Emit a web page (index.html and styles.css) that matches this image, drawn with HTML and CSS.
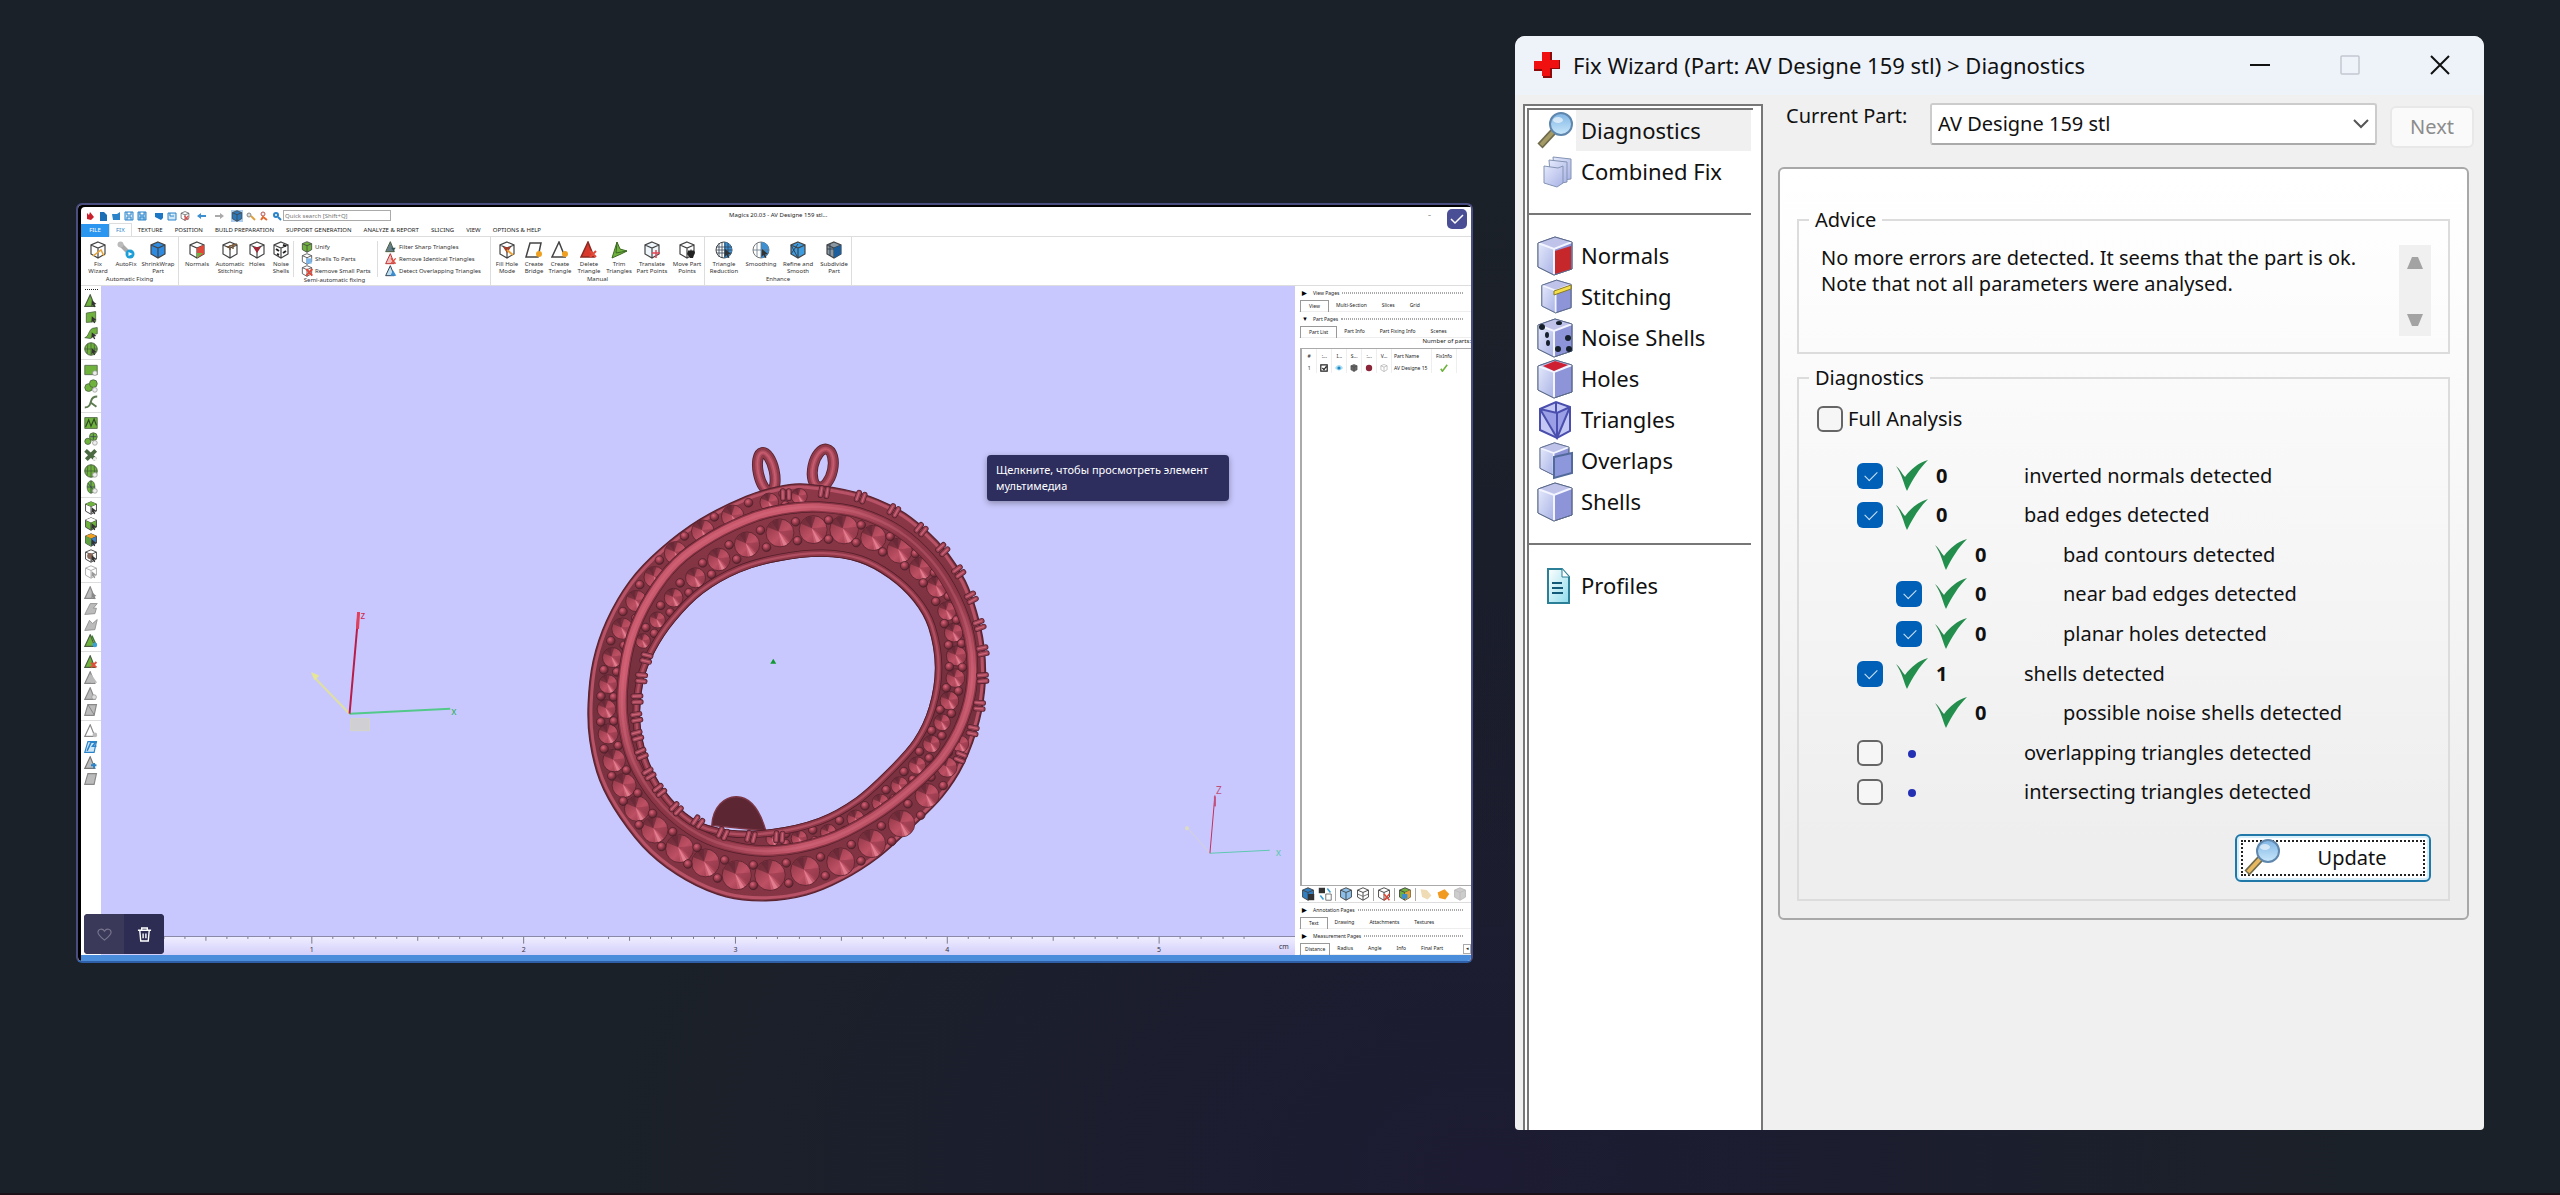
FILE: index.html
```html
<!DOCTYPE html>
<html lang="en">
<head>
<meta charset="utf-8">
<title>Fix Wizard</title>
<link rel="stylesheet" href="styles.css">
</head>
<body>
<svg class="defs" aria-hidden="true">
  <defs>
    <linearGradient id="gSide" x1="0" y1="0" x2="1" y2="1"><stop offset="0" stop-color="#e4e9fb"/><stop offset="1" stop-color="#a9b3e6"/></linearGradient>
    <linearGradient id="gLens" x1="0" y1="0" x2="0" y2="1"><stop offset="0" stop-color="#7fb4e4"/><stop offset="1" stop-color="#c9e8fb"/></linearGradient>
    <linearGradient id="gTick" x1="0" y1="0" x2="1" y2="1"><stop offset="0" stop-color="#2f7d4f"/><stop offset="1" stop-color="#17a04a"/></linearGradient>
    <linearGradient id="gDoc" x1="0" y1="0" x2="1" y2="1"><stop offset="0" stop-color="#fff"/><stop offset="1" stop-color="#8fdcec"/></linearGradient>
  </defs>
  <symbol id="lens" viewBox="0 0 36 38"><path d="M16 20L3 34" stroke="#6f6a4c" stroke-width="7"/><path d="M16 20L4 33" stroke="var(--grip,#a39a66)" stroke-width="4"/><ellipse cx="24" cy="12" rx="11" ry="11" fill="url(#gLens)" stroke="#5f86ad" stroke-width="2"/><ellipse cx="21" cy="8" rx="5" ry="3" fill="#fff" opacity=".6"/></symbol>
  <symbol id="box" viewBox="0 0 36 40"><path d="M1 7L18 1l17 5v27L17 39 1 31z" fill="#8d94d8" stroke="#5b6a99" stroke-width="1"/><path d="M1 7l16 6v26L1 31z" fill="url(#gSide)"/><path d="M1 7L18 1l17 5-18 7z" fill="#bfc3ea"/><path d="M1 7l16 6 18-7M17 13v26" fill="none" stroke="#f2f4ff" stroke-width="2"/><path d="M1 7L18 1l17 5v27L17 39 1 31z" fill="none" stroke="#5b6a88" stroke-width="1"/></symbol>
  <symbol id="cube" viewBox="0 0 18 18"><path d="M9 1l7 3v9l-7 4-7-4V4z" fill="var(--c,#fff)"/><path d="M9 1l7 3v9l-7 4-7-4V4zM2 4l7 3 7-3M9 7v10" fill="none" stroke="var(--s,#444)" stroke-width="1.2"/></symbol>
  <symbol id="cursor" viewBox="0 0 18 18"><path d="M10 8l6 5-3 .5 1.500 3-1.500.5-1.500-3-2 2z" fill="var(--k,#333)"/></symbol>
  <symbol id="tri" viewBox="0 0 18 18"><path d="M8 1L1 16h13z" fill="var(--c,#6fb23e)" stroke="var(--s,#4b5f42)" stroke-width="1.500"/></symbol>
  <symbol id="quad" viewBox="0 0 18 18"><path d="M5 2h11l-3 14H1z" fill="var(--c,#6fb23e)" stroke="var(--s,#4b5f42)" stroke-width="1.500"/></symbol>
  <symbol id="ball" viewBox="0 0 18 18"><circle cx="9" cy="9" r="8" fill="var(--c,#6fb23e)" stroke="var(--s,#4b5f42)" stroke-width="1.200"/><path d="M9 1v16M1 9h16M5 2l-1 13M13 2l1 13" stroke="var(--s,#4b5f42)" fill="none"/></symbol>
  <symbol id="tick" viewBox="0 0 32 32"><path d="M0 6c4 3 6 8 9 11C15 9 22 3 32 0 23 9 17 19 11 31 8 25 6 14 0 6z" fill="url(#gTick)"/></symbol>
</svg>

<main class="stage">
  <section class="app" aria-label="Magics">
    <header class="quick">
      <div class="quick-icons">
        <svg viewBox="0 0 10 10"><path d="M2 2l2 2 1-3 4 5-3 3-4-1z" fill="#c9202b"/></svg>
        <svg viewBox="0 0 10 10"><path d="M2 1h4l3 3v6H2z" fill="#1c6fb5"/></svg>
        <svg viewBox="0 0 10 10"><path d="M1 3h5l3-2v8H2z" fill="#2b84c9"/></svg>
        <svg viewBox="0 0 10 10"><path d="M1 1h8v8H1zM3 1v3h4V1M3 9V6h4v3" fill="#cfe6f7" stroke="#2b84c9"/></svg>
        <svg viewBox="0 0 10 10"><path d="M1 1h8v8H1zM3 1v3h4V1M3 9V6h4v3" fill="#9cc8ea" stroke="#2b84c9"/></svg>
        <i></i>
        <svg viewBox="0 0 10 10"><path d="M1 2h8v5L7 9 1 6z" fill="#1c78c5"/></svg>
        <svg viewBox="0 0 10 10"><path d="M1 2h8v7H1zM3 2v3h4" fill="#cfe6f7" stroke="#2b84c9"/></svg>
        <svg viewBox="0 0 18 18"><use href="#cube"/><path d="M8 9l7 7M15 9l-7 7" stroke="#e04848" stroke-width="2"/></svg>
        <i></i>
        <svg viewBox="0 0 10 10"><path d="M0 5l4-3v2h5v2H4v2z" fill="#3d8fd0"/></svg>
        <i></i>
        <svg viewBox="0 0 10 10"><path d="M10 5L6 2v2H1v2h5v2z" fill="#aaa"/></svg>
        <i></i>
        <svg class="on" viewBox="0 0 18 18"><use href="#cube" style="--c:#2b78bd"/></svg>
        <svg viewBox="0 0 10 10"><circle cx="3" cy="4" r="2" fill="#ddd" stroke="#888"/><path d="M5 5l4 4" stroke="#e0a040" stroke-width="2"/></svg>
        <svg viewBox="0 0 10 10"><circle cx="4" cy="3" r="2" fill="#eee" stroke="#b55"/><path d="M2 9l2-3 4 3" stroke="#e06a30" stroke-width="2" fill="none"/></svg>
        <svg viewBox="0 0 10 10"><circle cx="4" cy="4" r="2" fill="none" stroke="#2b84c9" stroke-width="2"/><path d="M6 6l3 3" stroke="#2b84c9" stroke-width="2"/></svg>
        <input class="search" type="text" aria-label="Quick search" placeholder="Quick search [Shift+Q]">
      </div>
      <span class="app-title">Magics 20.03 - AV Designe 159 stl...</span>
      <span class="app-min">–</span>
    </header>
    <nav class="menu">
      <a class="file" href="#">FILE</a><a class="sel" href="#">FIX</a><a href="#">TEXTURE</a><a href="#">POSITION</a><a href="#">BUILD PREPARATION</a><a href="#">SUPPORT GENERATION</a><a href="#">ANALYZE &amp; REPORT</a><a href="#">SLICING</a><a href="#">VIEW</a><a href="#">OPTIONS &amp; HELP</a>
    </nav>
    <div class="ribbon">
      <div class="group g1">
        <div class="tools">
          <button><svg viewBox="0 0 18 18"><use href="#cube"/><path d="M4 15l8-6 3 6" stroke="#e8a33a" stroke-width="1.500" fill="none"/></svg>Fix<br>Wizard</button>
          <button><svg viewBox="0 0 18 18"><path d="M3 3l9 9" stroke="#aaa" stroke-width="4"/><circle cx="3.500" cy="3.500" r="3" fill="#bbb"/><circle cx="13" cy="13" r="4.500" fill="#1c9fd8"/><path d="M11.500 11l4 2-4 2z" fill="#fff"/></svg>AutoFix</button>
          <button><svg viewBox="0 0 18 18"><use href="#cube" style="--c:#2f8be0"/></svg>ShrinkWrap<br>Part</button>
        </div>
        <span class="cap">Automatic Fixing</span>
      </div>
      <div class="group g2">
        <div class="tools">
          <button><svg viewBox="0 0 18 18"><use href="#cube"/><path d="M9 7l7-3v9l-7 4z" fill="#e0483a"/><path d="M9 12h6l-6 5z" fill="#6fb23e"/></svg>Normals</button>
          <button><svg viewBox="0 0 18 18"><use href="#cube"/><path d="M6 6l10-3M9 4v5M12 3v5" stroke="#7a5a3a" stroke-width="1.500"/></svg>Automatic<br>Stitching</button>
          <button><svg viewBox="0 0 18 18"><use href="#cube"/><path d="M5 6h8l-4 6z" fill="#a02834"/></svg>Holes</button>
          <button><svg viewBox="0 0 18 18"><use href="#cube"/><path d="M4 8l3 2M11 4l3 1M11 12l3-2M5 13l2 1" stroke="#222" stroke-width="2"/></svg>Noise<br>Shells</button>
          <ul class="list">
            <li><svg viewBox="0 0 18 18"><use href="#cube" style="--c:#6fb23e"/></svg>Unify</li>
            <li><svg viewBox="0 0 18 18"><use href="#cube"/><path d="M8 8h8v8H8z" fill="#7db7ea"/></svg>Shells To Parts</li>
            <li><svg viewBox="0 0 18 18"><use href="#cube"/><path d="M8 6l9 10M17 6L8 16" stroke="#e04838" stroke-width="3"/></svg>Remove Small Parts</li>
          </ul>
          <ul class="list">
            <li><svg viewBox="0 0 18 18"><use href="#tri" style="--c:#68808c"/><path d="M9 10h7l-3 5z" fill="#355"/></svg>Filter Sharp Triangles</li>
            <li><svg viewBox="0 0 18 18"><use href="#tri" style="--c:#f0c0c0;--s:#b33"/><path d="M9 8l7 8M16 8l-7 8" stroke="#e04838" stroke-width="2"/></svg>Remove Identical Triangles</li>
            <li><svg viewBox="0 0 18 18"><use href="#tri" style="--c:#bfe0f2;--s:#345"/><path d="M8 16h9L12 8z" fill="#3d8fd0"/></svg>Detect Overlapping Triangles</li>
          </ul>
        </div>
        <span class="cap">Semi-automatic fixing</span>
      </div>
      <div class="group g3">
        <div class="tools">
          <button><svg viewBox="0 0 18 18"><use href="#cube"/><path d="M5 6h8l-4 6z" fill="#a0402c"/><path d="M9 9l6 5" stroke="#e8a33a" stroke-width="2"/></svg>Fill Hole<br>Mode</button>
          <button><svg viewBox="0 0 18 18"><use href="#quad" style="--c:#fff;--s:#444"/><circle cx="14" cy="13" r="3" fill="#f0a020"/></svg>Create<br>Bridge</button>
          <button><svg viewBox="0 0 18 18"><use href="#tri" style="--c:#fff;--s:#444"/><circle cx="14" cy="13" r="3" fill="#f0a020"/></svg>Create<br>Triangle</button>
          <button><svg viewBox="0 0 18 18"><use href="#tri" style="--c:#d8382c;--s:#8a2a22"/><path d="M10 10l6 6M16 10l-6 6" stroke="#e04838" stroke-width="2"/></svg>Delete<br>Triangle</button>
          <button><svg viewBox="0 0 18 18"><path d="M7 1l3 7 7 2-6 3-9 4z" fill="#6fb23e" stroke="#3e6a24"/><path d="M7 1L6 12l11-2" fill="none" stroke="#3e6a24"/></svg>Trim<br>Triangles</button>
          <button><svg viewBox="0 0 18 18"><use href="#cube" style="--c:#eef6fc"/><path d="M9 12h8M13 9v8" stroke="#e04858" stroke-width="1.500"/></svg>Translate<br>Part Points</button>
          <button><svg viewBox="0 0 18 18"><use href="#cube"/><path d="M10 10l1-1 1 1 1-2 1 2 1-1 1 1 1 1-2 6h-3l-3-4z" fill="#222"/></svg>Move Part<br>Points</button>
        </div>
        <span class="cap">Manual</span>
      </div>
      <div class="group g4">
        <div class="tools">
          <button><svg viewBox="0 0 18 18"><circle cx="9" cy="9" r="8" fill="#fff" stroke="#444"/><path d="M9 1a8 8 0 010 16z" fill="#3d8fd0"/><path d="M4 2v14M7 1v16M10 1v16M13 2v14M1 6h16M1 9h16M2 12h14" stroke="#345" stroke-width=".8"/><use href="#cursor"/></svg>Triangle<br>Reduction</button>
          <button><svg viewBox="0 0 18 18"><circle cx="9" cy="9" r="8" fill="#fff" stroke="#777"/><path d="M9 1a8 8 0 010 16z" fill="#3d8fd0"/><path d="M5 2v14M9 1v16M1 9h16" stroke="#678" stroke-width=".8"/><use href="#cursor"/></svg>Smoothing</button>
          <button><svg viewBox="0 0 18 18"><use href="#cube" style="--c:#3d9be0"/><path d="M2 4l7 13M2 13l7-10" stroke="#345"/></svg>Refine and<br>Smooth</button>
          <button><svg viewBox="0 0 18 18"><use href="#cube" style="--c:#8a98a4"/><path d="M9 7l7-3v9l-7 4z" fill="#1c5f9c"/><path d="M2 8h7M5 3v12" stroke="#345"/></svg>Subdivide<br>Part</button>
        </div>
        <span class="cap">Enhance</span>
      </div>
    </div>
    <div class="work">
      <aside class="strip">
        <div><svg viewBox="0 0 18 18"><use href="#tri"/><use href="#cursor"/></svg><svg viewBox="0 0 18 18"><path d="M3 4l12-2v13l-12 1z" fill="#6fb23e" stroke="#4b5f42"/><use href="#cursor"/></svg><svg viewBox="0 0 18 18"><path d="M1 15c5-1 5-10 10-12l6-1v8c-6 0-6 6-9 6z" fill="#6fb23e" stroke="#4b5f42"/><use href="#cursor"/></svg><svg viewBox="0 0 18 18"><use href="#ball"/><use href="#cursor"/></svg></div>
        <div><svg viewBox="0 0 18 18"><path d="M1 3h16v12H1z" fill="#6fb23e" stroke="#4b5f42"/><circle cx="14" cy="13" r="3" fill="#eee" stroke="#999"/></svg><svg viewBox="0 0 18 18"><circle cx="6" cy="11" r="5" fill="#6fb23e" stroke="#4b5f42"/><circle cx="12" cy="6" r="5" fill="#6fb23e" stroke="#4b5f42"/><circle cx="14" cy="14" r="3" fill="#eee" stroke="#999"/></svg><svg viewBox="0 0 18 18"><path d="M1 16c6 0 7-4 8-8s3-6 8-6M9 10l7 5" fill="none" stroke="#5d7a50" stroke-width="2.500"/></svg></div>
        <div><svg viewBox="0 0 18 18"><path d="M1 2h16v14H1z" fill="#6fb23e" stroke="#4b5f42"/><path d="M2 14l4-9 3 8 4-9 3 8" stroke="#2e4a24" stroke-width="1.500" fill="none"/></svg><svg viewBox="0 0 18 18"><circle cx="5" cy="12" r="4" fill="#6fb23e" stroke="#4b5f42"/><circle cx="12" cy="6" r="5" fill="#6fb23e" stroke="#4b5f42"/><path d="M12 2v8M8 6h8" stroke="#345"/><circle cx="14" cy="14" r="3" fill="#eee" stroke="#999"/></svg><svg viewBox="0 0 18 18"><path d="M2 3l13 12M15 3L3 15" stroke="#4b6a42" stroke-width="5"/><circle cx="14" cy="14" r="2.500" fill="#eee"/></svg><svg viewBox="0 0 18 18"><use href="#ball"/><circle cx="14" cy="14" r="3" fill="#eee" stroke="#999"/></svg><svg viewBox="0 0 18 18"><ellipse cx="9" cy="9" rx="5" ry="8" fill="#6fb23e" stroke="#4b5f42"/><path d="M9 1v16M4 9h10M5 4l8 10" stroke="#345"/><circle cx="14" cy="14" r="3" fill="#eee" stroke="#999"/></svg></div>
        <div><svg viewBox="0 0 18 18"><use href="#cube"/><path d="M2 4l7-3 7 3-7 3z" fill="#6fb23e"/><use href="#cursor"/></svg><svg viewBox="0 0 18 18"><use href="#cube" style="--c:#6fb23e"/><path d="M2 4l7-3 7 3-7 3z" fill="#fff"/><use href="#cursor"/></svg><svg viewBox="0 0 18 18"><use href="#cube" style="--c:#3f7fc4"/><path d="M2 4l7-3 7 3-7 3z" fill="#f0a020"/><path d="M2 4l7 3v10l-7-4z" fill="#5fa040"/><use href="#cursor"/></svg><svg viewBox="0 0 18 18"><use href="#cube"/><circle cx="8" cy="9" r="4" fill="#8a6a5a"/><use href="#cursor"/></svg><svg viewBox="0 0 18 18"><use href="#cube" style="--s:#aaa"/><use href="#cursor" style="--k:#999"/></svg></div>
        <div class="dim"><svg viewBox="0 0 18 18"><use href="#tri"/><use href="#cursor"/></svg><svg viewBox="0 0 18 18"><path d="M1 16L8 2h9l-5 6h4l-2 7z" fill="#bbb" stroke="#888"/></svg><svg viewBox="0 0 18 18"><path d="M1 16L7 3l4 4 6-5-3 13z" fill="#bbb" stroke="#888"/></svg><svg class="live" viewBox="0 0 18 18"><use href="#tri"/><path d="M10 2l5 11" stroke="#3e7a34" stroke-width="2"/><circle cx="14" cy="14" r="3" fill="#3d9fd8"/></svg></div>
        <div class="dim"><svg class="live" viewBox="0 0 18 18"><use href="#tri"/><path d="M9 10l7 6M16 9l-7 7" stroke="#e0503a" stroke-width="2.500"/></svg><svg viewBox="0 0 18 18"><use href="#tri"/><path d="M9 4l8 11H9z" fill="#bbb"/></svg><svg viewBox="0 0 18 18"><use href="#tri"/><circle cx="13" cy="13" r="3" fill="#ddd" stroke="#999"/></svg><svg viewBox="0 0 18 18"><use href="#quad"/><path d="M5 2l8 13" stroke="#777"/></svg></div>
        <div class="dim"><svg viewBox="0 0 18 18"><use href="#tri" style="--c:#fff"/><circle cx="14" cy="14" r="3" fill="#bbb"/></svg><svg viewBox="0 0 18 18"><use href="#quad" style="--c:#cfe6f7;--s:#2b84c9"/><path d="M4 14L9 3h6l-4 5h5" fill="none" stroke="#2b84c9" stroke-width="2"/></svg><svg viewBox="0 0 18 18"><use href="#tri" style="--s:#777"/><path d="M9 12h7M13 9v7" stroke="#2b84c9" stroke-width="2.500"/></svg><svg viewBox="0 0 18 18"><use href="#quad"/></svg></div>
      </aside>
      <div class="view">
        <svg class="scene" viewBox="101 284 1195 652" role="img" aria-label="Ring model">
          <defs>
            <radialGradient id="bead" cx=".4" cy=".35" r=".65"><stop offset="0" stop-color="#d8627a"/><stop offset=".5" stop-color="#9c3d4e"/><stop offset="1" stop-color="#58222e"/></radialGradient>
            <linearGradient id="gem" x1="0" y1="0" x2="1" y2="1"><stop offset="0" stop-color="#85323f"/><stop offset=".55" stop-color="#be5064"/><stop offset="1" stop-color="#8a3344"/></linearGradient>
            <linearGradient id="body" x1="0" y1="0" x2="0" y2="1"><stop offset="0" stop-color="#8e3848"/><stop offset=".5" stop-color="#74303e"/><stop offset="1" stop-color="#863545"/></linearGradient>
            <linearGradient id="tube" x1="0" y1="0" x2="1" y2="1"><stop offset="0" stop-color="#c05266"/><stop offset=".25" stop-color="#cc5a6e"/><stop offset=".45" stop-color="#8d3748"/><stop offset=".6" stop-color="#8d3748"/><stop offset=".75" stop-color="#c4566a"/><stop offset="1" stop-color="#a04052"/></linearGradient>
          </defs>
          <g id="ring" transform="translate(560 420) scale(.33333)"></g>
          <path d="M774 658l3 5h-6z" fill="#0f9a30"/>
          <g fill="none" stroke-width="2">
            <path d="M349 713l-35-36" stroke="#dfdfa0"/><path d="M311 672l7 3-4 4z" fill="#e8e890" stroke="#e4e49a" stroke-width="1"/>
            <path d="M349 713l101-5" stroke="#52c98a"/><path d="M349 713l9-102" stroke="#b81c48"/><path d="M357 628l1-17" stroke="#e0405c" stroke-width="3"/>
            <path d="M350 718h19v12h-19z" fill="#cfcfd4" stroke="#d4d4c8" stroke-width="1"/>
          </g>
          <g fill="none" stroke-width="1">
            <path d="M1212 853l-23-26" stroke="#d4d2d0"/><circle cx="1189" cy="828" r="2" fill="#dcdcc0"/>
            <path d="M1212 853l60-3" stroke="#5cc8b0"/><path d="M1212 853l5-58" stroke="#c0305c"/><path d="M1217 806v-10" stroke="#c0507c" stroke-width="2"/>
          </g>
          <g class="axis"><text x="360" y="618" fill="#d02a50">z</text><text x="451" y="714" fill="#30b060">x</text><text x="1218" y="794" fill="#c0507c">Z</text><text x="1278" y="856" fill="#5cc8b0">x</text></g>
        </svg>
        <svg class="ruler" id="ruler" viewBox="101 936 1195 19" preserveAspectRatio="none"></svg>
      </div>
      <aside class="side">
        <h3><b>▶</b>View Pages<i></i></h3>
        <nav><a class="sel" href="#">View</a><a href="#">Multi-Section</a><a href="#">Slices</a><a href="#">Grid</a></nav>
        <h3><b>▼</b>Part Pages<i></i></h3>
        <nav><a class="sel" href="#">Part List</a><a href="#">Part Info</a><a href="#">Part Fixing Info</a><a href="#">Scenes</a></nav>
        <p>Number of parts:</p>
        <div class="parts">
          <table>
            <thead><tr><th>#</th><th>:...</th><th>I...</th><th>S...</th><th>:...</th><th>V...</th><th class="name">Part Name</th><th class="info">FixInfo</th></tr></thead>
            <tbody><tr><td>1</td>
              <td><svg viewBox="0 0 10 10"><path d="M1 1h8v8H1zM3 5l2 2 3-4" fill="#fff" stroke="#222" stroke-width="1.500"/></svg></td>
              <td><svg viewBox="0 0 10 10"><path d="M0 5c3-5 7-5 10 0-3 4-7 4-10 0z" fill="#a8dcf2"/><circle cx="5" cy="5" r="2" fill="#1c86c4"/></svg></td>
              <td><svg viewBox="0 0 18 18"><use href="#cube" style="--c:#666"/></svg></td>
              <td><svg viewBox="0 0 10 10"><circle cx="5" cy="5" r="4" fill="#8a2438"/></svg></td>
              <td><svg viewBox="0 0 18 18"><use href="#cube" style="--s:#999"/></svg></td>
              <td class="name">AV Designe 15</td>
              <td><svg viewBox="0 0 10 10"><path d="M1 6l2 3 6-8" fill="none" stroke="#6fb23e" stroke-width="2"/></svg></td></tr></tbody>
          </table>
        </div>
        <div class="bar">
          <svg viewBox="0 0 18 18"><use href="#cube" style="--c:#2f7fc4"/><path d="M9 9h8v8H9z" fill="#333"/></svg><svg viewBox="0 0 18 18"><path d="M1 1h8v7H1z" fill="#333"/><path d="M10 9h7v8h-7z" fill="#fff" stroke="#555"/><path d="M3 11l4 5M12 2l4 5" stroke="#3d9fd8" stroke-width="2"/></svg><i></i>
          <svg viewBox="0 0 18 18"><use href="#cube" style="--c:#8cc0ea"/></svg><svg viewBox="0 0 18 18"><use href="#cube"/><path d="M2 9l7 3 7-3" stroke="#555" fill="none"/></svg><i></i>
          <svg viewBox="0 0 18 18"><use href="#cube"/><path d="M9 9l7 8M16 9l-7 8" stroke="#e04838" stroke-width="2"/></svg><i></i>
          <svg viewBox="0 0 18 18"><use href="#cube" style="--c:#6fb23e"/><path d="M9 7l7-3v9l-7 4z" fill="#e0a23a"/><path d="M5 9h7v6H5z" fill="#3d8fd0"/></svg><i></i>
          <svg viewBox="0 0 18 18"><path d="M2 3l8 1 6 7-5 5-7-3z" fill="#f0dcb4"/></svg><svg viewBox="0 0 18 18"><path d="M2 7l9-4 6 6-5 7-8-2z" fill="#f09a20"/></svg><svg viewBox="0 0 18 18"><use href="#cube" style="--c:#ccc;--s:#bbb"/></svg>
        </div>
        <h3><b>▶</b>Annotation Pages<i></i></h3>
        <nav><a class="sel" href="#">Text</a><a href="#">Drawing</a><a href="#">Attachments</a><a href="#">Textures</a></nav>
        <h3><b>▶</b>Measurement Pages<i></i></h3>
        <nav class="tight"><a class="sel" href="#">Distance</a><a href="#">Radius</a><a href="#">Angle</a><a href="#">Info</a><a href="#">Final Part</a><button aria-label="Scroll tabs">◂</button></nav>
      </aside>
    </div>
    <div class="tip" role="tooltip">Щелкните, чтобы просмотреть элемент мультимедиа</div>
    <button class="picked" aria-label="Selected"><svg viewBox="0 0 20 20"><path d="M4 10l4 4 8-8" fill="none" stroke="#fff" stroke-width="1.500"/></svg></button>
    <div class="acts">
      <button aria-label="Like"><svg viewBox="0 0 16 16"><path d="M8 14C3 10 1 8 1 5.500 1 2 6 1 8 4.500 10 1 15 2 15 5.500 15 8 13 10 8 14z" fill="none" stroke="#77758c" stroke-width="1.200"/></svg></button>
      <button class="bin" aria-label="Delete"><svg viewBox="0 0 16 16"><path d="M1 3.500h14M5 3V1h6v2M3 4l1 11h8l1-11M6.500 7v5M9.500 7v5" fill="none" stroke="#fff" stroke-width="1.500"/></svg></button>
    </div>
  </section>

  <section class="dialog" aria-label="Fix Wizard">
    <header class="titlebar">
      <svg class="cross" viewBox="0 0 28 28"><path d="M10 1h9v8h8v9h-8v9h-9v-7H1V10h9z" fill="#8c0a0a"/><path d="M9 1h8v8h9v8h-9v8H9v-7H1v-8h8z" fill="#f01010"/></svg>
      <h1>Fix Wizard (Part: AV Designe 159 stl) &gt; Diagnostics</h1>
      <div class="wins">
        <button aria-label="Minimize"><svg viewBox="0 0 20 20"><path d="M0 10h20" stroke="#111" stroke-width="2"/></svg></button>
        <button aria-label="Maximize" disabled><svg viewBox="0 0 20 20"><rect x="1" y="1" width="18" height="18" rx="1" fill="none" stroke="#c3c8d0" stroke-width="1.500"/></svg></button>
        <button aria-label="Close"><svg viewBox="0 0 20 20"><path d="M1 1l18 18M19 1L1 19" stroke="#111" stroke-width="2"/></svg></button>
      </div>
    </header>
    <div class="content">
      <nav class="steps">
        <div class="inner">
        <a class="sel" href="#"><svg viewBox="0 0 36 38"><use href="#lens"/></svg><span>Diagnostics</span></a>
        <a href="#"><svg viewBox="0 0 36 40"><g stroke="#8494b4" fill="url(#gSide)"><path d="M16 5l18 2v20l-16 2z"/><path d="M12 8l18 2v20l-16 3z"/><path d="M7 14l14 2 5-2v17l-6 4-13-4z"/></g></svg><span>Combined Fix</span></a>
        <hr>
        <a href="#"><svg viewBox="0 0 36 40"><use href="#box"/><path d="M18 15l16-5v23l-16 5z" fill="#c5272b"/></svg><span>Normals</span></a>
        <a href="#"><svg viewBox="0 0 36 40"><use href="#box" x="4" y="2" width="31" height="35"/><path d="M17 14l17-6v4l-17 6z" fill="#f5e04c" stroke="#8a7a20"/></svg><span>Stitching</span></a>
        <a href="#"><svg viewBox="0 0 36 40"><use href="#box"/><g fill="#16202c"><ellipse cx="5" cy="9" rx="3" ry="3"/><ellipse cx="22" cy="5" rx="3" ry="2"/><ellipse cx="10" cy="17" rx="2" ry="3"/><ellipse cx="11" cy="25" rx="2" ry="3"/><ellipse cx="21" cy="31" rx="3" ry="3"/><ellipse cx="31" cy="20" rx="3" ry="3"/><ellipse cx="32" cy="31" rx="3" ry="3"/></g></svg><span>Noise Shells</span></a>
        <a href="#"><svg viewBox="0 0 36 40"><use href="#box"/><path d="M6 7l12-5 13 4-14 6z" fill="#cf1f33"/></svg><span>Holes</span></a>
        <a href="#"><svg viewBox="0 0 36 40"><path d="M3 9l16-7 14 5v24L20 38 3 30z" fill="#c4c8f4" stroke="#4a4fae" stroke-width="2"/><path d="M3 9l17 29L33 7 20 13z" fill="#9a9fe6"/><path d="M3 9l17 29L33 7M3 9l17 4 13-6M20 13v25M19 2v11" fill="none" stroke="#4a4fae" stroke-width="2"/></svg><span>Triangles</span></a>
        <a href="#"><svg viewBox="0 0 36 40"><use href="#box" x="2" y="1" width="31" height="34"/><path d="M17 16l18-4v20l-18 5z" fill="#8d98dc" stroke="#52699c" stroke-width="2"/></svg><span>Overlaps</span></a>
        <a href="#"><svg viewBox="0 0 36 40"><use href="#box"/></svg><span>Shells</span></a>
        <hr>
        <a href="#"><svg viewBox="0 0 36 40"><path d="M11 3h14l7 8v26H11z" fill="url(#gDoc)" stroke="#2b7f96" stroke-width="2"/><path d="M25 3v8h7" fill="#fff" stroke="#2b7f96"/><path d="M15 17h10M15 22h11M15 27h11" stroke="#145a78" stroke-width="2"/></svg><span>Profiles</span></a>
        </div>
      </nav>
      <div class="pane">
        <div class="current">
          <label for="part">Current Part:</label>
          <div class="pick"><select id="part"><option>AV Designe 159 stl</option></select><svg viewBox="0 0 16 10"><path d="M1 1l7 7 7-7" fill="none" stroke="#555" stroke-width="2"/></svg></div>
          <button class="next" disabled>Next</button>
        </div>
        <div class="sheet">
          <fieldset class="advice">
            <legend>Advice</legend>
            <p>No more errors are detected. It seems that the part is ok.<br>Note that not all parameters were analysed.</p>
            <div class="scroll"><svg viewBox="0 0 16 12"><path d="M5 0h6l5 12H0z" fill="#a3a3a3"/></svg><svg viewBox="0 0 16 12"><path d="M5 12h6l5-12H0z" fill="#a3a3a3"/></svg></div>
          </fieldset>
          <fieldset class="diag">
            <legend>Diagnostics</legend>
            <label class="full"><input type="checkbox">Full Analysis</label>
            <div class="checks">
              <div class="row"><input id="c1" type="checkbox" checked><svg><use href="#tick"/></svg><b>0</b><label for="c1">inverted normals detected</label></div>
              <div class="row"><input id="c2" type="checkbox" checked><svg><use href="#tick"/></svg><b>0</b><label for="c2">bad edges detected</label></div>
              <div class="row sub"><i></i><svg><use href="#tick"/></svg><b>0</b><span>bad contours detected</span></div>
              <div class="row sub"><input id="c3" type="checkbox" checked><svg><use href="#tick"/></svg><b>0</b><label for="c3">near bad edges detected</label></div>
              <div class="row sub"><input id="c4" type="checkbox" checked><svg><use href="#tick"/></svg><b>0</b><label for="c4">planar holes detected</label></div>
              <div class="row"><input id="c5" type="checkbox" checked><svg><use href="#tick"/></svg><b>1</b><label for="c5">shells detected</label></div>
              <div class="row sub"><i></i><svg><use href="#tick"/></svg><b>0</b><span>possible noise shells detected</span></div>
              <div class="row"><input id="c6" type="checkbox"><svg viewBox="0 0 32 32"><circle cx="16" cy="17" r="4" fill="#2430b4"/></svg><b></b><label for="c6">overlapping triangles detected</label></div>
              <div class="row"><input id="c7" type="checkbox"><svg viewBox="0 0 32 32"><circle cx="16" cy="17" r="4" fill="#2430b4"/></svg><b></b><label for="c7">intersecting triangles detected</label></div>
            </div>
            <button class="update"><span class="focus"><svg viewBox="0 0 36 38"><use href="#lens"/></svg><span>Update</span></span></button>
          </fieldset>
        </div>
      </div>
    </div>
  </section>
</main>
<script src="ring.js"></script>
</body>
</html>
```
FILE: styles.css
```css
* { box-sizing: border-box; }
body { margin: 0; background: #1b2128; font-family: "Noto Sans", "Open Sans", sans-serif; color: #111; }
button { font: inherit; color: inherit; border: 0; padding: 0; background: none; }
a { color: inherit; text-decoration: none; }
ul, p, h1, h3 { margin: 0; padding: 0; list-style: none; font-weight: 400; }
.defs { position: absolute; width: 0; height: 0; }

.stage { display: grid; grid-template-columns: 1397fr 969fr; align-items: center; gap: 42px; min-height: 100vh; padding: 36px 76px 63px; border-bottom: 2px solid #1c1118;
  background: radial-gradient(ellipse 35% 50% at 58% 98%, #1c1b33, transparent), radial-gradient(ellipse 10% 40% at 58% 55%, #1a1d2b, transparent); }

/* Magics window */
.app { position: relative; min-width: 0; aspect-ratio: 1397 / 760; display: flex; flex-direction: column; overflow: hidden; border: 2px solid #4a4d80; border-bottom-color: #2f5fa6; border-radius: 6px; background: #fff; box-shadow: inset 3px 2px #000; padding: 2px 0 0 3px; font-size: 6px; line-height: 7px; color: #333; }
.app::after { content: ""; height: 6px; flex: none; background: #4a8ddb; }
.quick { flex: none; height: 17px; display: flex; align-items: center; padding-left: 4px; }
.quick-icons { display: flex; align-items: center; gap: 3px; flex: 0 0 644px; }
.quick-icons svg { width: 10px; height: 10px; }
.quick-icons i { width: 1px; height: 8px; }
.quick-icons .on { background: #a8cdf0; width: 12px; height: 12px; }
.search { width: 108px; height: 11px; margin-left: -2px; padding: 0 1px; border: 1px solid #aaa; font: inherit; }
.search::placeholder { color: #777; }
.app-title { flex: 1; color: #222; }
.app-min { margin-right: 40px; }
.menu { flex: none; height: 13px; display: flex; align-items: center; gap: 12px; border-bottom: 1px solid #ddd; color: #222; }
.menu .file { background: #2b96f0; color: #fff; width: 28px; line-height: 13px; text-align: center; margin-right: -12px; }
.menu .sel { color: #2b84c9; padding: 0 6px; line-height: 13px; border: 1px solid #ddd; border-width: 1px 1px 0; margin-right: -6px; }
.ribbon { flex: none; height: 49px; display: flex; border-bottom: 1px solid #ddd; }
.group { display: flex; flex-direction: column; border-right: 1px solid #ddd; text-align: center; }
.tools { flex: 1; display: grid; padding-top: 4px; }
.g1 { width: 98px; } .g1 .tools { grid-template-columns: 34px 22px 42px; }
.g2 { width: 312px; } .g2 .tools { grid-template-columns: 36px 30px 24px 24px 84px 114px; }
.g3 { width: 214px; } .g3 .tools { grid-template-columns: 32px 22px 30px 28px 32px 34px 36px; }
.g4 { width: 147px; } .g4 .tools { grid-template-columns: 38px 36px 38px 34px; }
.tools button { display: flex; flex-direction: column; align-items: center; white-space: nowrap; line-height: 7px; }
.tools button svg { width: 18px; height: 18px; margin-bottom: 2px; flex: none; }
.cap { height: 9px; }
.list { text-align: left; padding-left: 7px; border-left: 1px solid #ddd; }
.list li { display: flex; align-items: center; gap: 2px; height: 12px; white-space: nowrap; }
.list svg { width: 12px; height: 12px; }

.work { flex: 1; min-height: 0; display: flex; }
.strip { width: 20px; flex: none; padding-top: 8px; }
.strip::before { content: ""; display: block; width: 13px; margin: -5px 0 4px 4px; border-top: 1px dotted #222; }
.strip div { display: flex; flex-direction: column; align-items: center; gap: 2px; padding-bottom: 3px; margin-bottom: 3px; border-bottom: 1px solid #ddd; }
.strip div:last-child { border: 0; }
.strip svg { width: 14px; height: 14px; }
.strip .dim { --c: #bbb; --s: #888; --k: #888; }
.strip .live { --c: #6fb23e; --s: #4b5f42; }
.view { flex: 1; min-width: 0; display: flex; flex-direction: column; background: #c9c8fe; }
.scene { flex: 1; min-height: 0; width: 100%; display: block; }
.axis { font-size: 10px; }
.ruler { flex: none; height: 19px; width: 100%; border-top: 1px solid #8a89a8; background: linear-gradient(#efedff, #d2cffb); font-size: 7px; fill: #334; }
.side { width: 176px; flex: none; padding-left: 4px; display: flex; flex-direction: column; font-size: 5px; background: #fff; overflow: hidden; color: #222; }
.side h3 { display: flex; align-items: center; height: 14px; flex: none; font-size: 5px; padding: 0 8px 0 3px; }
.side h3 b { width: 11px; color: #000; font-size: 6px; }
.side h3 i { flex: 1; height: 2px; margin-left: 3px; border: 1px dotted #aaa; border-width: 1px 0; }
.side nav { display: flex; align-items: center; height: 12px; flex: none; gap: 15px; padding-left: 1px; border-bottom: 1px solid #eee; }
.side nav .sel { padding: 0 8px; margin-right: -8px; line-height: 11px; border: 1px solid #999; border-width: 1px 1px 0; }
.side .tight .sel { padding: 0 4px; }
.side .tight button { border: 1px solid #aaa; width: 8px; height: 10px; margin-left: auto; }
.side p { text-align: right; height: 10px; font-size: 6px; }
.parts { flex: 1; border: 1px solid #aaa; border-width: 1px 0 1px 2px; margin-left: 1px; }
.parts table { border-collapse: collapse; width: 155px; table-layout: fixed; }
.parts th, .parts td { padding: 0; height: 10px; font-weight: 400; text-align: center; border-right: 1px solid #eee; }
.parts .name { width: 40px; text-align: left; padding-left: 2px; white-space: nowrap; overflow: hidden; }
.parts .info { width: 25px; }
.parts th { height: 14px; }
.parts td svg { width: 8px; height: 8px; display: block; margin: auto; }
.bar { display: flex; align-items: center; height: 17px; flex: none; gap: 3px; padding-left: 2px; border-bottom: 1px solid #ddd; }
.bar svg { width: 14px; height: 14px; flex: none; }
.bar i { width: 1px; height: 13px; background: #aaa; }

.tip { position: absolute; left: 909px; top: 250px; width: 242px; padding: 7px 9px; border-radius: 4px; background: #2d2d5e; color: #fff; font-size: 11px; line-height: 16px; box-shadow: 0 2px 6px #0005; }
.picked { position: absolute; right: 4px; top: 4px; width: 20px; height: 20px; border-radius: 5px; background: #4a4f95; }
.picked svg { width: 20px; display: block; }
.acts { position: absolute; left: 6px; bottom: 7px; display: flex; border-radius: 4px; overflow: hidden; background: #2d2d54; }
.acts button { width: 40px; height: 40px; display: grid; place-items: center; background: #3b3959; }
.acts .bin { background: #2d2d54; }
.acts svg { width: 15px; height: 15px; }

/* Fix wizard */
.dialog { min-width: 0; align-self: stretch; display: flex; flex-direction: column; background: #f0f0f0; border-radius: 10px 10px 4px 4px; overflow: hidden; font-size: 20px; line-height: 26px; }
.titlebar { flex: none; height: 59px; display: flex; align-items: center; gap: 12px; padding: 0 34px 2px 18px; background: #eef3fa; }
.cross { width: 28px; height: 28px; }
.titlebar h1 { flex: 1; font-size: 22px; line-height: 30px; white-space: nowrap; }
.wins { display: flex; gap: 70px; }
.wins svg { width: 20px; height: 20px; display: block; }
.content { flex: 1; display: flex; padding-left: 8px; }
.steps { width: 240px; flex: none; margin-top: 9px; padding: 2px 8px 0 2px; border: 2px solid #777; border-bottom: 0; background: #fff; }
.inner { height: 100%; border: solid #777; border-width: 2px 0 0 2px; padding-right: 2px; }
.steps a { display: flex; align-items: center; height: 41px; padding-left: 8px; font-size: 22px; }
.steps svg { width: 36px; height: 40px; flex: none; margin-right: 3px; }
.steps span { flex: 1; line-height: 41px; padding-left: 5px; }
.steps .sel span { background: #f0f0f0; }
.steps hr { margin: 0; height: 43px; border: 0; background: linear-gradient(#777, #777) center / 100% 2px no-repeat; }
.pane { flex: 1; min-width: 0; padding: 8px 10px 0 15px; }
.current { display: flex; align-items: flex-start; height: 64px; }
.current label { width: 152px; flex: none; padding-left: 8px; white-space: nowrap; }
.pick { position: relative; flex: 1; margin-right: 13px; }
.pick select { width: 100%; height: 42px; padding: 0 6px; appearance: none; font: inherit; color: #111; background: #fff; border: 2px solid #ccc; border-bottom-color: #aaa; border-radius: 3px; }
.pick svg { position: absolute; right: 8px; top: 16px; width: 16px; height: 10px; }
.next { width: 84px; height: 42px; margin-top: 3px; border: 2px solid #e8e8e8; border-radius: 6px; background: #fafafa; color: #8c8c8c; }
.sheet { margin-right: 5px; height: 753px; padding: 38px 17px 0; border: 2px solid #a8a8a8; border-radius: 6px; background: linear-gradient(#fff, #fdfdfd 15%, #eee 90%); }
fieldset { margin: 0; min-width: 0; border: 2px solid #dcdcdc; }
legend { padding: 0 6px; }
.advice { height: 147px; padding: 12px 17px 14px 22px; display: flex; justify-content: space-between; }
.advice legend { margin-left: -12px; }
.advice p { white-space: nowrap; }
.scroll { width: 32px; height: 91px; background: #f0f0f0; display: flex; flex-direction: column; justify-content: space-between; align-items: center; padding: 12px 0 10px; }
.scroll svg { width: 16px; height: 12px; }
.diag { height: 536px; margin-top: 11px; padding: 15px 17px 0 18px; display: flex; flex-direction: column; }
.diag legend { margin-left: -8px; }
.full { display: flex; align-items: center; gap: 5px; height: 26px; }
input[type=checkbox] { appearance: none; margin: 0; width: 26px; height: 26px; flex: none; border: 2px solid #666; border-radius: 6px; background: #f6f6f6; }
input[type=checkbox]:checked { border: 0; background: #0060b8; position: relative; }
input[type=checkbox]:checked::after { content: ""; position: absolute; left: 8px; top: 8px; width: 11px; height: 6px; border: solid #cfe4f6; border-width: 0 0 1px 1px; transform: rotate(-45deg); }
.checks { display: grid; grid-auto-rows: 1fr; height: 356px; margin-top: 24px; }
.row { display: grid; grid-template-columns: 39px 40px 88px 1fr; align-items: center; padding-left: 40px; white-space: nowrap; }
.row.sub { padding-left: 79px; }
.row svg { width: 32px; height: 32px; }
.update { align-self: flex-end; width: 196px; height: 48px; margin-top: 22px; padding: 4px; border: 2px solid #1f78a8; border-radius: 6px; background: #fff; box-shadow: inset 0 0 0 2px #d6effa; --grip: #e8b860; }
.focus { display: flex; align-items: center; height: 100%; border: 2px dotted #222; }
.focus svg { width: 38px; height: 38px; }
.focus span { flex: 1; text-align: center; }
```
FILE: ring.js
```js
// Draws the ring model and the ruler as SVG shapes.
const NS = 'http://www.w3.org/2000/svg';
const ring = document.getElementById('ring');

function add(parent, tag, attrs, text) {
  const el = document.createElementNS(NS, tag);
  for (const k in attrs) el.setAttribute(k, attrs[k]);
  if (text) el.textContent = text;
  parent.appendChild(el);
  return el;
}

// Closed Catmull-Rom curve through the points.
function loop(p) {
  const n = p.length;
  let d = `M${p[0]}`;
  for (let i = 0; i < n; i++) {
    const a = p[(i + n - 1) % n], b = p[i], c = p[(i + 1) % n], e = p[(i + 2) % n];
    d += `C${b[0] + (c[0] - a[0]) / 6} ${b[1] + (c[1] - a[1]) / 6} ${c[0] - (e[0] - b[0]) / 6} ${c[1] - (e[1] - b[1]) / 6} ${c}`;
  }
  return d + 'Z';
}

const outer = [[740,188],[900,215],[1020,265],[1100,325],[1170,400],[1220,480],[1253,570],[1275,670],[1280,780],[1262,900],[1215,1030],[1150,1130],[1060,1220],[960,1310],[850,1380],[740,1425],[620,1442],[500,1430],[380,1380],[270,1300],[180,1190],[120,1080],[90,960],[85,850],[100,720],[140,600],[210,480],[300,385],[420,295],[560,225],[660,195]];
const ridge = [[780,257],[900,275],[1020,330],[1120,420],[1190,530],[1232,650],[1240,780],[1212,900],[1150,1010],[1060,1100],[940,1190],[800,1260],[640,1292],[500,1275],[390,1225],[290,1135],[220,1020],[190,900],[190,780],[215,650],[270,530],[350,425],[460,345],[590,285],[690,262]];
const inner = [[790,405],[900,422],[990,470],[1065,540],[1110,620],[1130,740],[1112,860],[1065,960],[985,1050],[890,1135],[780,1195],[640,1228],[510,1230],[400,1195],[310,1105],[262,1010],[240,900],[250,780],[285,690],[345,600],[430,515],[540,452],[660,418]];

const inBand = [[250,660,22],[293,597,24],[342,530,28],[408,470,30],[478,415,34],[563,370,38],[662,335,42],[762,325,42],[855,325,43],[943,350,38],[1022,388,38],[1085,443,34],[1135,497,32],[1165,570,28],[1185,635,28],[1193,705,30],[1190,772,28],[1172,840,28],[1150,905,25],[1118,970,26],[1075,1035,26],[1022,1095,26],[965,1147,26],[890,1195,26],[808,1236,24],[720,1254,24],[640,1256,20]];
const outBand = [[720,225,24],[630,243,28],[520,285,34],[430,330,34],[348,395,34],[285,468,32],[230,540,32],[188,623,32],[158,710,30],[145,790,28],[140,865,28],[145,940,30],[163,1020,34],[193,1095,36],[232,1165,38],[285,1228,40],[360,1285,42],[438,1328,42],[532,1365,44],[632,1365,46],[738,1352,44],[845,1325,42],[938,1270,42],[1028,1210,40],[1105,1125,36],[1165,1040,30],[1205,970,25]];
const edge = [[260,712],[245,772],[232,835],[230,890],[232,945],[245,1000],[268,1060],[300,1110],[350,1165],[415,1205],[490,1240],[575,1250],[660,1250],[680,220],[795,212],[905,227],[1005,268],[1087,325],[1152,385],[1200,452],[1238,530],[1262,612],[1272,690],[1272,772],[1262,855],[1242,930],[1205,1010]];

// Bail loops and the tab behind the ring.
for (const [x, y, rx, ry, a] of [[621,152,24,60,-12], [791,140,30,58,12]]) {
  for (const [c, w] of [['#57222d', 33], ['#8f3a4a', 28], ['#b04d60', 14], ['#c65c6e', 5]])
    add(ring, 'ellipse', {cx: x, cy: y, rx, ry, transform: `rotate(${a} ${x} ${y})`, fill: 'none', stroke: c, 'stroke-width': w});
}
add(ring, 'path', {d: 'M457 1215C460 1160 495 1128 532 1129C580 1130 605 1180 620 1232Z', fill: '#5c2733', stroke: '#7c3646', 'stroke-width': 4});

add(ring, 'path', {d: loop(outer) + loop(inner), 'fill-rule': 'evenodd', fill: 'url(#body)', stroke: '#5a2330', 'stroke-width': 4});
const rim = outer.map(([x, y]) => [683 + (x - 683) * .985, 815 + (y - 815) * .985]);
add(ring, 'path', {d: loop(rim), fill: 'none', stroke: '#b85266', 'stroke-width': 9});

function gem(x, y, r) {
  add(ring, 'circle', {cx: x, cy: y, r, fill: 'url(#gem)', stroke: '#4a1c27', 'stroke-width': 2});
  const ax = x - r * .1, ay = y - r * .1;
  const wedge = (a, b, fill, opacity) => {
    const p = t => `${x + r * .96 * Math.cos(t)} ${y + r * .96 * Math.sin(t)}`;
    add(ring, 'path', {d: `M${ax} ${ay}L${p(a)}A${r} ${r} 0 0 1 ${p(b)}Z`, fill, opacity});
  };
  wedge(-2.7, -1.4, '#5e2432', .6);
  wedge(-2.2, -1.7, '#5e2432', .5);
  wedge(-.2, .6, '#8d3647', .5);
  wedge(.8, 1.5, '#d8697d', .6);
  wedge(1, 1.3, '#ec8b9c', .7);
}
function bead(x, y, r) {
  add(ring, 'circle', {cx: x, cy: y, r, fill: 'url(#bead)', stroke: '#4c1d28', 'stroke-width': 2});
}
for (const band of [inBand, outBand]) {
  band.forEach(g => gem(...g));
  for (let i = 0; i + 1 < band.length; i++) {
    const [x1, y1, r1] = band[i], [x2, y2, r2] = band[i + 1];
    const mx = (x1 + x2) / 2, my = (y1 + y2) / 2;
    const len = Math.hypot(x2 - x1, y2 - y1);
    const nx = -(y2 - y1) / len, ny = (x2 - x1) / len, o = (r1 + r2) * .34;
    bead(mx + nx * o, my + ny * o, 13);
    bead(mx - nx * o, my - ny * o, 13);
  }
}
for (const [c, w] of [['#541f2b', 34], ['#8a3546', 30], ['url(#tube)', 22]])
  add(ring, 'path', {d: loop(ridge), fill: 'none', stroke: c, 'stroke-width': w});
add(ring, 'path', {d: loop(ridge), fill: 'none', stroke: '#dd7588', 'stroke-width': 8, opacity: .3});
const lip = inner.map(([x, y]) => [690 + (x - 690) * 1.022, 820 + (y - 820) * 1.022]);
for (const [c, w] of [['#541f2b', 22], ['#8f3849', 17], ['#b04f62', 7]])
  add(ring, 'path', {d: loop(lip), fill: 'none', stroke: c, 'stroke-width': w});

// Prongs point away from the ring's centre.
for (const [x, y] of edge) {
  const a = Math.atan2(y - 815, x - 690), dx = Math.cos(a) * 11, dy = Math.sin(a) * 11;
  for (const s of [-9, 9]) {
    const ox = -Math.sin(a) * s, oy = Math.cos(a) * s;
    const d = `M${x - dx + ox} ${y - dy + oy}L${x + dx + ox} ${y + dy + oy}`;
    add(ring, 'path', {d, stroke: '#5a2330', 'stroke-width': 17, 'stroke-linecap': 'round'});
    add(ring, 'path', {d, stroke: '#a24558', 'stroke-width': 12, 'stroke-linecap': 'round'});
    add(ring, 'path', {d, stroke: '#cc6478', 'stroke-width': 4, 'stroke-linecap': 'round'});
  }
}

const ruler = document.getElementById('ruler');
for (let i = -9; i < 45; i++) {
  const x = Math.round(312 + i * 21.2);
  add(ruler, 'path', {d: `M${x} 936v${i % 10 === 0 ? 7 : i % 5 === 0 ? 4 : 2}`, stroke: '#778'});
  if (i % 10 === 0) add(ruler, 'text', {x: x - 2, y: 952}, String(i / 10 + 1));
}
add(ruler, 'text', {x: 1280, y: 949}, 'cm');
```
